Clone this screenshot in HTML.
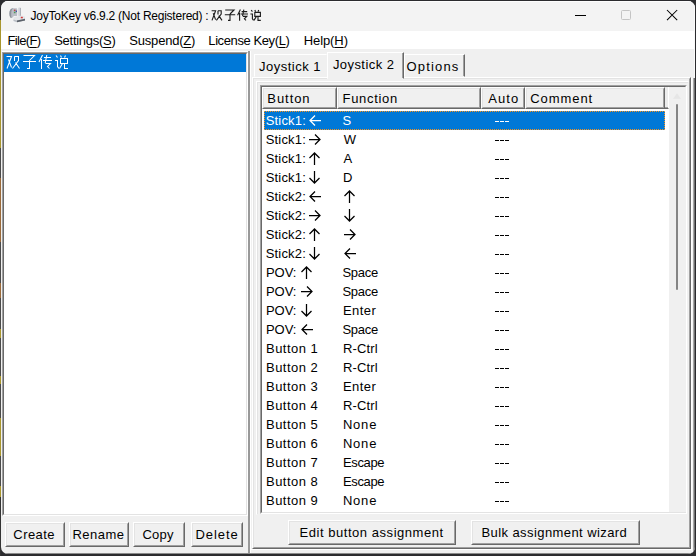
<!DOCTYPE html>
<html><head><meta charset="utf-8">
<style>
*{margin:0;padding:0;box-sizing:border-box}
html,body{width:696px;height:556px;overflow:hidden;background:#2b2b2e;font-family:"Liberation Sans",sans-serif;font-size:13px;color:#000}
.a{position:absolute}
#win{position:absolute;left:1px;top:1px;width:694px;height:553px;background:#f0f0f0;border-radius:7px;overflow:hidden}
#pg{position:absolute;left:-1px;top:-1px;width:696px;height:556px}
.t{position:absolute;white-space:nowrap;line-height:20px}
u{text-decoration:underline;text-underline-offset:2px;text-decoration-thickness:1px}
.btn{position:absolute;background:#f0f0f0;border:1px solid;border-color:#fff #696969 #696969 #fff}
.btn:before{content:"";position:absolute;left:0;top:0;right:0;bottom:0;border:1px solid;border-color:#e3e3e3 #a0a0a0 #a0a0a0 #e3e3e3}
.hd{position:absolute;top:87px;height:22px;background:#f0f0f0;border:1px solid;border-color:#fff #696969 #696969 #fff}
.hd:before{content:"";position:absolute;left:0;top:0;right:0;bottom:0;border:1px solid;border-color:#e3e3e3 #a0a0a0 #a0a0a0 #e3e3e3}
</style></head><body>
<div id="win"><div id="pg">
  <!-- title bar -->
  <div class="a" style="left:0;top:0;width:696px;height:31px;background:#f3f3f3"></div>
  <svg class="a" style="left:6px;top:4px" width="24" height="22" viewBox="0 0 24 22">
    <path d="M6.8 4.2 C4.6 4.2 3.4 6.6 3.4 9.4 C3.4 12.4 4.4 14 5.6 14 C6.6 14 7 12.6 8 12 L10.4 12 C11 12 11.2 11.6 11.2 11 L11.2 5.4 C11.2 4.6 10.8 4.2 10 4.2 Z" fill="#babec6"/>
    <path d="M6.8 4.2 C4.6 4.2 3.4 6.6 3.4 9.4 C3.4 12.4 4.4 14 5.6 14 C5.1 12 5 9 5.6 6.6 C6 5 6.8 4.4 7.6 4.2 Z" fill="#8c929a"/>
    <rect x="7.9" y="5.6" width="1.6" height="1.5" fill="#c44848"/>
    <rect x="7.9" y="7.7" width="1.6" height="1.5" fill="#4c9a58"/>
    <rect x="9.7" y="6.5" width="1.3" height="1.6" fill="#3f55a8"/>
    <rect x="12.1" y="3.6" width="2.7" height="8.6" rx="0.9" fill="#d6d9de"/>
    <rect x="13.9" y="3.9" width="0.9" height="8.2" fill="#a2a7ae"/>
    <path d="M7.5 13.2 L15.8 11.6 L19 12.4 L19 16.4 L11 18 L7.5 17 Z" fill="#e4e6e9"/>
    <path d="M7.5 15.4 L11 16.4 L19 14.8 L19 16.6 L11 18.2 L7.5 17 Z" fill="#babec4"/>
    <path d="M11 16.4 L19 14.8 L19 16.6 L11 18.2 Z" fill="#5c626a"/>
    <rect x="14.8" y="12.8" width="2" height="1.5" fill="#d23a3a"/>
  </svg>
  <div class="t" style="left:30.60px;top:6px;font-size:12px;letter-spacing:-0.242px;color:#000">JoyToKey v6.9.2 (Not Registered) :</div>
  <svg class="a" style="left:0;top:0" width="270" height="30" viewBox="0 0 270 30"><path transform="translate(206.4 -34.4) scale(0.8)" d="M6.5 56.5 H11.5 L7 68.5 M8.5 59.5 L11.5 67.5 M14.5 56.5 H18.5 V60.5 L12.5 68.5 M14.5 56.5 V61 M15.5 62.5 L19.5 68.5 M23.5 55.5 H34.5 L29.5 60.5 M23 61.5 H36 M29.5 60.5 V68.5 H27 M42.5 55 L39 62 M41.5 59 V69 M44 57.5 H51 M46.8 55 L45.2 63 M43 60.5 H52 M45.5 63.5 H50.5 L47.5 66.5 L49.5 68.5 M56 55.5 L57.5 57.5 M55 60.5 H57.5 V66.5 L59 68.5 M60.5 55.5 L61.5 57.5 M65.5 55.5 L64.5 57.5 M60.5 58.5 H67.5 V63.5 H60.5 Z M62.5 63.5 L59.5 68.5 M64.5 63.5 V68.5 H68" fill="none" stroke="#1c1c1c" stroke-width="1.4"/></svg>
  <div class="a" style="left:575px;top:15px;width:11px;height:1px;background:#000"></div>
  <div class="a" style="left:621px;top:10px;width:10px;height:10px;border:1px solid #c4c4c4;border-radius:1.5px"></div>
  <svg class="a" style="left:666px;top:9px" width="12" height="12" viewBox="0 0 12 12"><path d="M1 1 L11.2 11.2 M11.2 1 L1 11.2" stroke="#000" stroke-width="1.05"/></svg>

  <!-- menu -->
  <div class="a" style="left:0;top:31px;width:696px;height:18px;background:#fff"></div>
  <div class="t" style="left:7.60px;top:31px;font-size:13px;letter-spacing:-0.683px">File(<u>F</u>)</div><div class="t" style="left:54.20px;top:31px;font-size:13px;letter-spacing:-0.270px">Settings(<u>S</u>)</div><div class="t" style="left:129.30px;top:31px;font-size:13px;letter-spacing:-0.200px">Suspend(<u>Z</u>)</div><div class="t" style="left:208.30px;top:31px;font-size:13px;letter-spacing:-0.400px">License Key(<u>L</u>)</div><div class="t" style="left:303.70px;top:31px;font-size:13px;letter-spacing:-0.083px">Help(<u>H</u>)</div>

  <!-- left list box -->
  <div class="a" style="left:2px;top:51px;width:246px;height:1px;background:#fff"></div>
  <div class="a" style="left:2px;top:52px;width:246px;height:464px;border:1px solid;border-color:#a0a0a0 #fff #fff #a0a0a0">
    <div class="a" style="left:0;top:0;right:0;bottom:0;border:1px solid;border-color:#696969 #e3e3e3 #e3e3e3 #696969;background:#fff"></div>
  </div>
  <div class="a" style="left:4px;top:54px;width:242px;height:18px;background:#0078d7"></div>
  <svg class="a" style="left:0;top:0" width="80" height="80" viewBox="0 0 80 80"><path d="M6.5 56.5 H11.5 L7 68.5 M8.5 59.5 L11.5 67.5 M14.5 56.5 H18.5 V60.5 L12.5 68.5 M14.5 56.5 V61 M15.5 62.5 L19.5 68.5 M23.5 55.5 H34.5 L29.5 60.5 M23 61.5 H36 M29.5 60.5 V68.5 H27 M42.5 55 L39 62 M41.5 59 V69 M44 57.5 H51 M46.8 55 L45.2 63 M43 60.5 H52 M45.5 63.5 H50.5 L47.5 66.5 L49.5 68.5 M56 55.5 L57.5 57.5 M55 60.5 H57.5 V66.5 L59 68.5 M60.5 55.5 L61.5 57.5 M65.5 55.5 L64.5 57.5 M60.5 58.5 H67.5 V63.5 H60.5 Z M62.5 63.5 L59.5 68.5 M64.5 63.5 V68.5 H68" fill="none" stroke="#fff" stroke-width="1.05"/></svg>

  <div class="btn" style="left:5px;top:522px;width:60px;height:25px"></div>
  <div class="btn" style="left:69px;top:522px;width:60px;height:25px"></div>
  <div class="btn" style="left:133px;top:522px;width:52px;height:25px"></div>
  <div class="btn" style="left:191px;top:522px;width:52px;height:25px"></div>
  <div class="t" style="left:13.30px;top:525px;font-size:13px;letter-spacing:0.440px">Create</div><div class="t" style="left:72.40px;top:525px;font-size:13px;letter-spacing:0.480px">Rename</div><div class="t" style="left:142.40px;top:525px;font-size:13px;letter-spacing:0.233px">Copy</div><div class="t" style="left:195.40px;top:525px;font-size:13px;letter-spacing:0.960px">Delete</div>

  <!-- splitter -->
  <div class="a" style="left:248px;top:51px;width:2px;height:503px;background:#999"></div>
  <div class="a" style="left:250px;top:51px;width:1px;height:502px;background:#fff"></div>

  <!-- tab page -->
  <div class="a" style="left:252px;top:77px;width:439px;height:472px;border:1px solid;border-color:#fff #696969 #696969 #fff">
    <div class="a" style="left:0;top:0;right:0;bottom:0;border:1px solid;border-color:#e3e3e3 #a0a0a0 #a0a0a0 #e3e3e3"></div>
  </div>
  <!-- tabs -->
  <div class="a" style="left:254px;top:54px;width:73px;height:23px;border:1px solid;border-color:#fff transparent transparent #fff;background:#f0f0f0"></div>
  <div class="a" style="left:404px;top:54px;width:61px;height:23px;border:1px solid;border-color:#fff #696969 transparent #fff;background:#f0f0f0;box-shadow:inset -1px 0 0 #a0a0a0"></div>
  <div class="a" style="left:327px;top:52px;width:77px;height:27px;background:#f0f0f0;border:1px solid;border-color:#fff #696969 transparent #fff;box-shadow:inset -1px 0 0 #a0a0a0"></div>
  <div class="t" style="left:259.00px;top:57px;font-size:13px;letter-spacing:0.500px">Joystick 1</div><div class="t" style="left:332.90px;top:55px;font-size:13px;letter-spacing:0.433px">Joystick 2</div><div class="t" style="left:406.50px;top:57px;font-size:13px;letter-spacing:1.167px">Options</div>

  <!-- listview -->
  <div class="a" style="left:256px;top:81px;width:433px;height:434px;border:1px solid;border-color:#fff transparent transparent #fff;box-shadow:inset 1px 1px 0 #e3e3e3"></div>
  <div class="a" style="left:260px;top:85px;width:427px;height:429px;border:1px solid;border-color:#a0a0a0 #fff #fff #a0a0a0">
    <div class="a" style="left:0;top:0;right:0;bottom:0;border:1px solid;border-color:#696969 #e3e3e3 #e3e3e3 #696969;background:#fff"></div>
  </div>
  <div class="hd" style="left:262px;width:75px"></div>
  <div class="hd" style="left:337px;width:144px"></div>
  <div class="hd" style="left:481px;width:44px"></div>
  <div class="hd" style="left:525px;width:140px"></div>
  <div class="a" style="left:665px;top:87px;width:4px;height:22px;background:#ececec;border-bottom:1px solid #696969;border-right:1px solid #fff;box-shadow:inset 0 -1px 0 #a0a0a0"></div>
  <div class="t" style="left:267.30px;top:89px;font-size:13px;letter-spacing:0.940px">Button</div><div class="t" style="left:342.50px;top:89px;font-size:13px;letter-spacing:0.700px">Function</div><div class="t" style="left:488.30px;top:89px;font-size:13px;letter-spacing:1.067px">Auto</div><div class="t" style="left:530.30px;top:89px;font-size:13px;letter-spacing:0.917px">Comment</div>
  <!-- scrollbar -->
  <div class="a" style="left:669px;top:87px;width:17px;height:425px;background:#f0f0f0"></div>
  <svg class="a" style="left:671px;top:92px" width="12" height="8" viewBox="0 0 12 8"><path d="M2 6.8 L6 1.2 L10 6.8 Z" fill="#e6e6e6"/></svg>
  <div class="a" style="left:676px;top:104px;width:2px;height:186px;background:#858585;border-radius:1px"></div>

<div class="a" style="left:264px;top:111px;width:401px;height:19px;background:#0078d7;outline:1px dotted #f7931e;outline-offset:-1px"></div>
<div class="t" style="left:265.70px;top:111px;font-size:13px;letter-spacing:0.183px;color:#fff">Stick1:</div>
<svg class="a" style="left:309px;top:115px" width="12" height="11" viewBox="0 0 12 11"><path d="M12 5.5 H1 M6 0.5 L1 5.5 L6 10.5" fill="none" stroke="#fff" stroke-width="1.25"/></svg>
<div class="t" style="left:342.50px;top:111px;font-size:13px;color:#fff">S</div>
<div class="a" style="left:495px;top:121px;width:14px;height:1px;background:repeating-linear-gradient(90deg,#fff 0 4px,transparent 4px 5px)"></div>
<div class="t" style="left:265.70px;top:130px;font-size:13px;letter-spacing:0.183px;color:#000">Stick1:</div>
<svg class="a" style="left:309px;top:134px" width="12" height="11" viewBox="0 0 12 11"><path d="M0 5.5 H11 M6 0.5 L11 5.5 L6 10.5" fill="none" stroke="#000" stroke-width="1.25"/></svg>
<div class="t" style="left:343.70px;top:130px;font-size:13px;color:#000">W</div>
<div class="a" style="left:495px;top:140px;width:14px;height:1px;background:repeating-linear-gradient(90deg,#000 0 4px,transparent 4px 5px)"></div>
<div class="t" style="left:265.70px;top:149px;font-size:13px;letter-spacing:0.183px;color:#000">Stick1:</div>
<svg class="a" style="left:309px;top:152px" width="11" height="13" viewBox="0 0 11 13"><path d="M5.5 13 V1 M0.5 6 L5.5 1 L10.5 6" fill="none" stroke="#000" stroke-width="1.25"/></svg>
<div class="t" style="left:343.50px;top:149px;font-size:13px;color:#000">A</div>
<div class="a" style="left:495px;top:159px;width:14px;height:1px;background:repeating-linear-gradient(90deg,#000 0 4px,transparent 4px 5px)"></div>
<div class="t" style="left:265.70px;top:168px;font-size:13px;letter-spacing:0.183px;color:#000">Stick1:</div>
<svg class="a" style="left:309px;top:171px" width="11" height="13" viewBox="0 0 11 13"><path d="M5.5 0 V12 M0.5 7 L5.5 12 L10.5 7" fill="none" stroke="#000" stroke-width="1.25"/></svg>
<div class="t" style="left:343.00px;top:168px;font-size:13px;color:#000">D</div>
<div class="a" style="left:495px;top:178px;width:14px;height:1px;background:repeating-linear-gradient(90deg,#000 0 4px,transparent 4px 5px)"></div>
<div class="t" style="left:265.70px;top:187px;font-size:13px;letter-spacing:0.183px;color:#000">Stick2:</div>
<svg class="a" style="left:309px;top:191px" width="12" height="11" viewBox="0 0 12 11"><path d="M12 5.5 H1 M6 0.5 L1 5.5 L6 10.5" fill="none" stroke="#000" stroke-width="1.25"/></svg>
<svg class="a" style="left:344px;top:190px" width="11" height="13" viewBox="0 0 11 13"><path d="M5.5 13 V1 M0.5 6 L5.5 1 L10.5 6" fill="none" stroke="#000" stroke-width="1.25"/></svg>
<div class="a" style="left:495px;top:197px;width:14px;height:1px;background:repeating-linear-gradient(90deg,#000 0 4px,transparent 4px 5px)"></div>
<div class="t" style="left:265.70px;top:206px;font-size:13px;letter-spacing:0.183px;color:#000">Stick2:</div>
<svg class="a" style="left:309px;top:210px" width="12" height="11" viewBox="0 0 12 11"><path d="M0 5.5 H11 M6 0.5 L11 5.5 L6 10.5" fill="none" stroke="#000" stroke-width="1.25"/></svg>
<svg class="a" style="left:344px;top:209px" width="11" height="13" viewBox="0 0 11 13"><path d="M5.5 0 V12 M0.5 7 L5.5 12 L10.5 7" fill="none" stroke="#000" stroke-width="1.25"/></svg>
<div class="a" style="left:495px;top:216px;width:14px;height:1px;background:repeating-linear-gradient(90deg,#000 0 4px,transparent 4px 5px)"></div>
<div class="t" style="left:265.70px;top:225px;font-size:13px;letter-spacing:0.183px;color:#000">Stick2:</div>
<svg class="a" style="left:309px;top:228px" width="11" height="13" viewBox="0 0 11 13"><path d="M5.5 13 V1 M0.5 6 L5.5 1 L10.5 6" fill="none" stroke="#000" stroke-width="1.25"/></svg>
<svg class="a" style="left:344px;top:229px" width="12" height="11" viewBox="0 0 12 11"><path d="M0 5.5 H11 M6 0.5 L11 5.5 L6 10.5" fill="none" stroke="#000" stroke-width="1.25"/></svg>
<div class="a" style="left:495px;top:235px;width:14px;height:1px;background:repeating-linear-gradient(90deg,#000 0 4px,transparent 4px 5px)"></div>
<div class="t" style="left:265.70px;top:244px;font-size:13px;letter-spacing:0.183px;color:#000">Stick2:</div>
<svg class="a" style="left:309px;top:247px" width="11" height="13" viewBox="0 0 11 13"><path d="M5.5 0 V12 M0.5 7 L5.5 12 L10.5 7" fill="none" stroke="#000" stroke-width="1.25"/></svg>
<svg class="a" style="left:344px;top:248px" width="12" height="11" viewBox="0 0 12 11"><path d="M12 5.5 H1 M6 0.5 L1 5.5 L6 10.5" fill="none" stroke="#000" stroke-width="1.25"/></svg>
<div class="a" style="left:495px;top:254px;width:14px;height:1px;background:repeating-linear-gradient(90deg,#000 0 4px,transparent 4px 5px)"></div>
<div class="t" style="left:266.00px;top:263px;font-size:13px;letter-spacing:-0.067px;color:#000">POV:</div>
<svg class="a" style="left:301px;top:266px" width="11" height="13" viewBox="0 0 11 13"><path d="M5.5 13 V1 M0.5 6 L5.5 1 L10.5 6" fill="none" stroke="#000" stroke-width="1.25"/></svg>
<div class="t" style="left:342.50px;top:263px;font-size:13px;letter-spacing:-0.300px;color:#000">Space</div>
<div class="a" style="left:495px;top:273px;width:14px;height:1px;background:repeating-linear-gradient(90deg,#000 0 4px,transparent 4px 5px)"></div>
<div class="t" style="left:266.00px;top:282px;font-size:13px;letter-spacing:-0.067px;color:#000">POV:</div>
<svg class="a" style="left:301px;top:286px" width="12" height="11" viewBox="0 0 12 11"><path d="M0 5.5 H11 M6 0.5 L11 5.5 L6 10.5" fill="none" stroke="#000" stroke-width="1.25"/></svg>
<div class="t" style="left:342.50px;top:282px;font-size:13px;letter-spacing:-0.300px;color:#000">Space</div>
<div class="a" style="left:495px;top:292px;width:14px;height:1px;background:repeating-linear-gradient(90deg,#000 0 4px,transparent 4px 5px)"></div>
<div class="t" style="left:266.00px;top:301px;font-size:13px;letter-spacing:-0.067px;color:#000">POV:</div>
<svg class="a" style="left:301px;top:304px" width="11" height="13" viewBox="0 0 11 13"><path d="M5.5 0 V12 M0.5 7 L5.5 12 L10.5 7" fill="none" stroke="#000" stroke-width="1.25"/></svg>
<div class="t" style="left:342.90px;top:301px;font-size:13px;letter-spacing:0.450px;color:#000">Enter</div>
<div class="a" style="left:495px;top:311px;width:14px;height:1px;background:repeating-linear-gradient(90deg,#000 0 4px,transparent 4px 5px)"></div>
<div class="t" style="left:266.00px;top:320px;font-size:13px;letter-spacing:-0.067px;color:#000">POV:</div>
<svg class="a" style="left:301px;top:324px" width="12" height="11" viewBox="0 0 12 11"><path d="M12 5.5 H1 M6 0.5 L1 5.5 L6 10.5" fill="none" stroke="#000" stroke-width="1.25"/></svg>
<div class="t" style="left:342.50px;top:320px;font-size:13px;letter-spacing:-0.300px;color:#000">Space</div>
<div class="a" style="left:495px;top:330px;width:14px;height:1px;background:repeating-linear-gradient(90deg,#000 0 4px,transparent 4px 5px)"></div>
<div class="t" style="left:266.00px;top:339px;font-size:13px;letter-spacing:0.471px;color:#000">Button 1</div>
<div class="t" style="left:342.90px;top:339px;font-size:13px;letter-spacing:0.160px;color:#000">R-Ctrl</div>
<div class="a" style="left:495px;top:349px;width:14px;height:1px;background:repeating-linear-gradient(90deg,#000 0 4px,transparent 4px 5px)"></div>
<div class="t" style="left:266.00px;top:358px;font-size:13px;letter-spacing:0.471px;color:#000">Button 2</div>
<div class="t" style="left:342.90px;top:358px;font-size:13px;letter-spacing:0.160px;color:#000">R-Ctrl</div>
<div class="a" style="left:495px;top:368px;width:14px;height:1px;background:repeating-linear-gradient(90deg,#000 0 4px,transparent 4px 5px)"></div>
<div class="t" style="left:266.00px;top:377px;font-size:13px;letter-spacing:0.471px;color:#000">Button 3</div>
<div class="t" style="left:342.90px;top:377px;font-size:13px;letter-spacing:0.450px;color:#000">Enter</div>
<div class="a" style="left:495px;top:387px;width:14px;height:1px;background:repeating-linear-gradient(90deg,#000 0 4px,transparent 4px 5px)"></div>
<div class="t" style="left:266.00px;top:396px;font-size:13px;letter-spacing:0.471px;color:#000">Button 4</div>
<div class="t" style="left:342.90px;top:396px;font-size:13px;letter-spacing:0.160px;color:#000">R-Ctrl</div>
<div class="a" style="left:495px;top:406px;width:14px;height:1px;background:repeating-linear-gradient(90deg,#000 0 4px,transparent 4px 5px)"></div>
<div class="t" style="left:266.00px;top:415px;font-size:13px;letter-spacing:0.471px;color:#000">Button 5</div>
<div class="t" style="left:342.90px;top:415px;font-size:13px;letter-spacing:0.800px;color:#000">None</div>
<div class="a" style="left:495px;top:425px;width:14px;height:1px;background:repeating-linear-gradient(90deg,#000 0 4px,transparent 4px 5px)"></div>
<div class="t" style="left:266.00px;top:434px;font-size:13px;letter-spacing:0.471px;color:#000">Button 6</div>
<div class="t" style="left:342.90px;top:434px;font-size:13px;letter-spacing:0.800px;color:#000">None</div>
<div class="a" style="left:495px;top:444px;width:14px;height:1px;background:repeating-linear-gradient(90deg,#000 0 4px,transparent 4px 5px)"></div>
<div class="t" style="left:266.00px;top:453px;font-size:13px;letter-spacing:0.471px;color:#000">Button 7</div>
<div class="t" style="left:342.90px;top:453px;font-size:13px;letter-spacing:-0.340px;color:#000">Escape</div>
<div class="a" style="left:495px;top:463px;width:14px;height:1px;background:repeating-linear-gradient(90deg,#000 0 4px,transparent 4px 5px)"></div>
<div class="t" style="left:266.00px;top:472px;font-size:13px;letter-spacing:0.471px;color:#000">Button 8</div>
<div class="t" style="left:342.90px;top:472px;font-size:13px;letter-spacing:-0.340px;color:#000">Escape</div>
<div class="a" style="left:495px;top:482px;width:14px;height:1px;background:repeating-linear-gradient(90deg,#000 0 4px,transparent 4px 5px)"></div>
<div class="t" style="left:266.00px;top:491px;font-size:13px;letter-spacing:0.471px;color:#000">Button 9</div>
<div class="t" style="left:342.90px;top:491px;font-size:13px;letter-spacing:0.800px;color:#000">None</div>
<div class="a" style="left:495px;top:501px;width:14px;height:1px;background:repeating-linear-gradient(90deg,#000 0 4px,transparent 4px 5px)"></div>

  <div class="btn" style="left:288px;top:520px;width:168px;height:25px"></div>
  <div class="btn" style="left:471px;top:520px;width:169px;height:25px"></div>
  <div class="t" style="left:299.50px;top:523px;font-size:13px;letter-spacing:0.543px">Edit button assignment</div><div class="t" style="left:481.40px;top:523px;font-size:13px;letter-spacing:0.424px">Bulk assignment wizard</div>
  <div class="a" style="left:0;top:553px;width:696px;height:1px;background:#8a8a8a"></div>
  <div class="a" style="left:691px;top:78px;width:1px;height:472px;background:#fff"></div>
  <div class="a" style="left:250px;top:549px;width:442px;height:1px;background:#fff"></div>
  <div class="a" style="left:692px;top:78px;width:1px;height:476px;background:#f5f5f5"></div>
  <div class="a" style="left:693px;top:78px;width:1px;height:478px;background:#a8a8a8"></div>
  <div class="a" style="left:694px;top:78px;width:1px;height:478px;background:#707070"></div>
  <div class="a" style="left:694px;top:0;width:1px;height:78px;background:#fafafa"></div>
  <div class="a" style="left:0;top:1px;width:696px;height:1px;background:#fdfdfd"></div>
</div></div>
<div class="a" style="left:0;top:0;width:1px;height:556px;background:linear-gradient(180deg,#2b2b2e 0px 20px,#a8962e 20px 148px,#4a4a4a 148px 178px,#9a6a3a 178px 242px,#4a4a4a 242px 283px,#9a6a3a 283px 298px,#4a4a4a 298px 329px,#a8962e 329px 338px,#4a4a4a 338px 376px,#a8962e 376px 384px,#4a4a4a 384px 418px,#a8962e 418px 456px,#4a4a4a 456px 486px,#a8962e 486px 497px,#333 497px 556px)"></div>
</body></html>
